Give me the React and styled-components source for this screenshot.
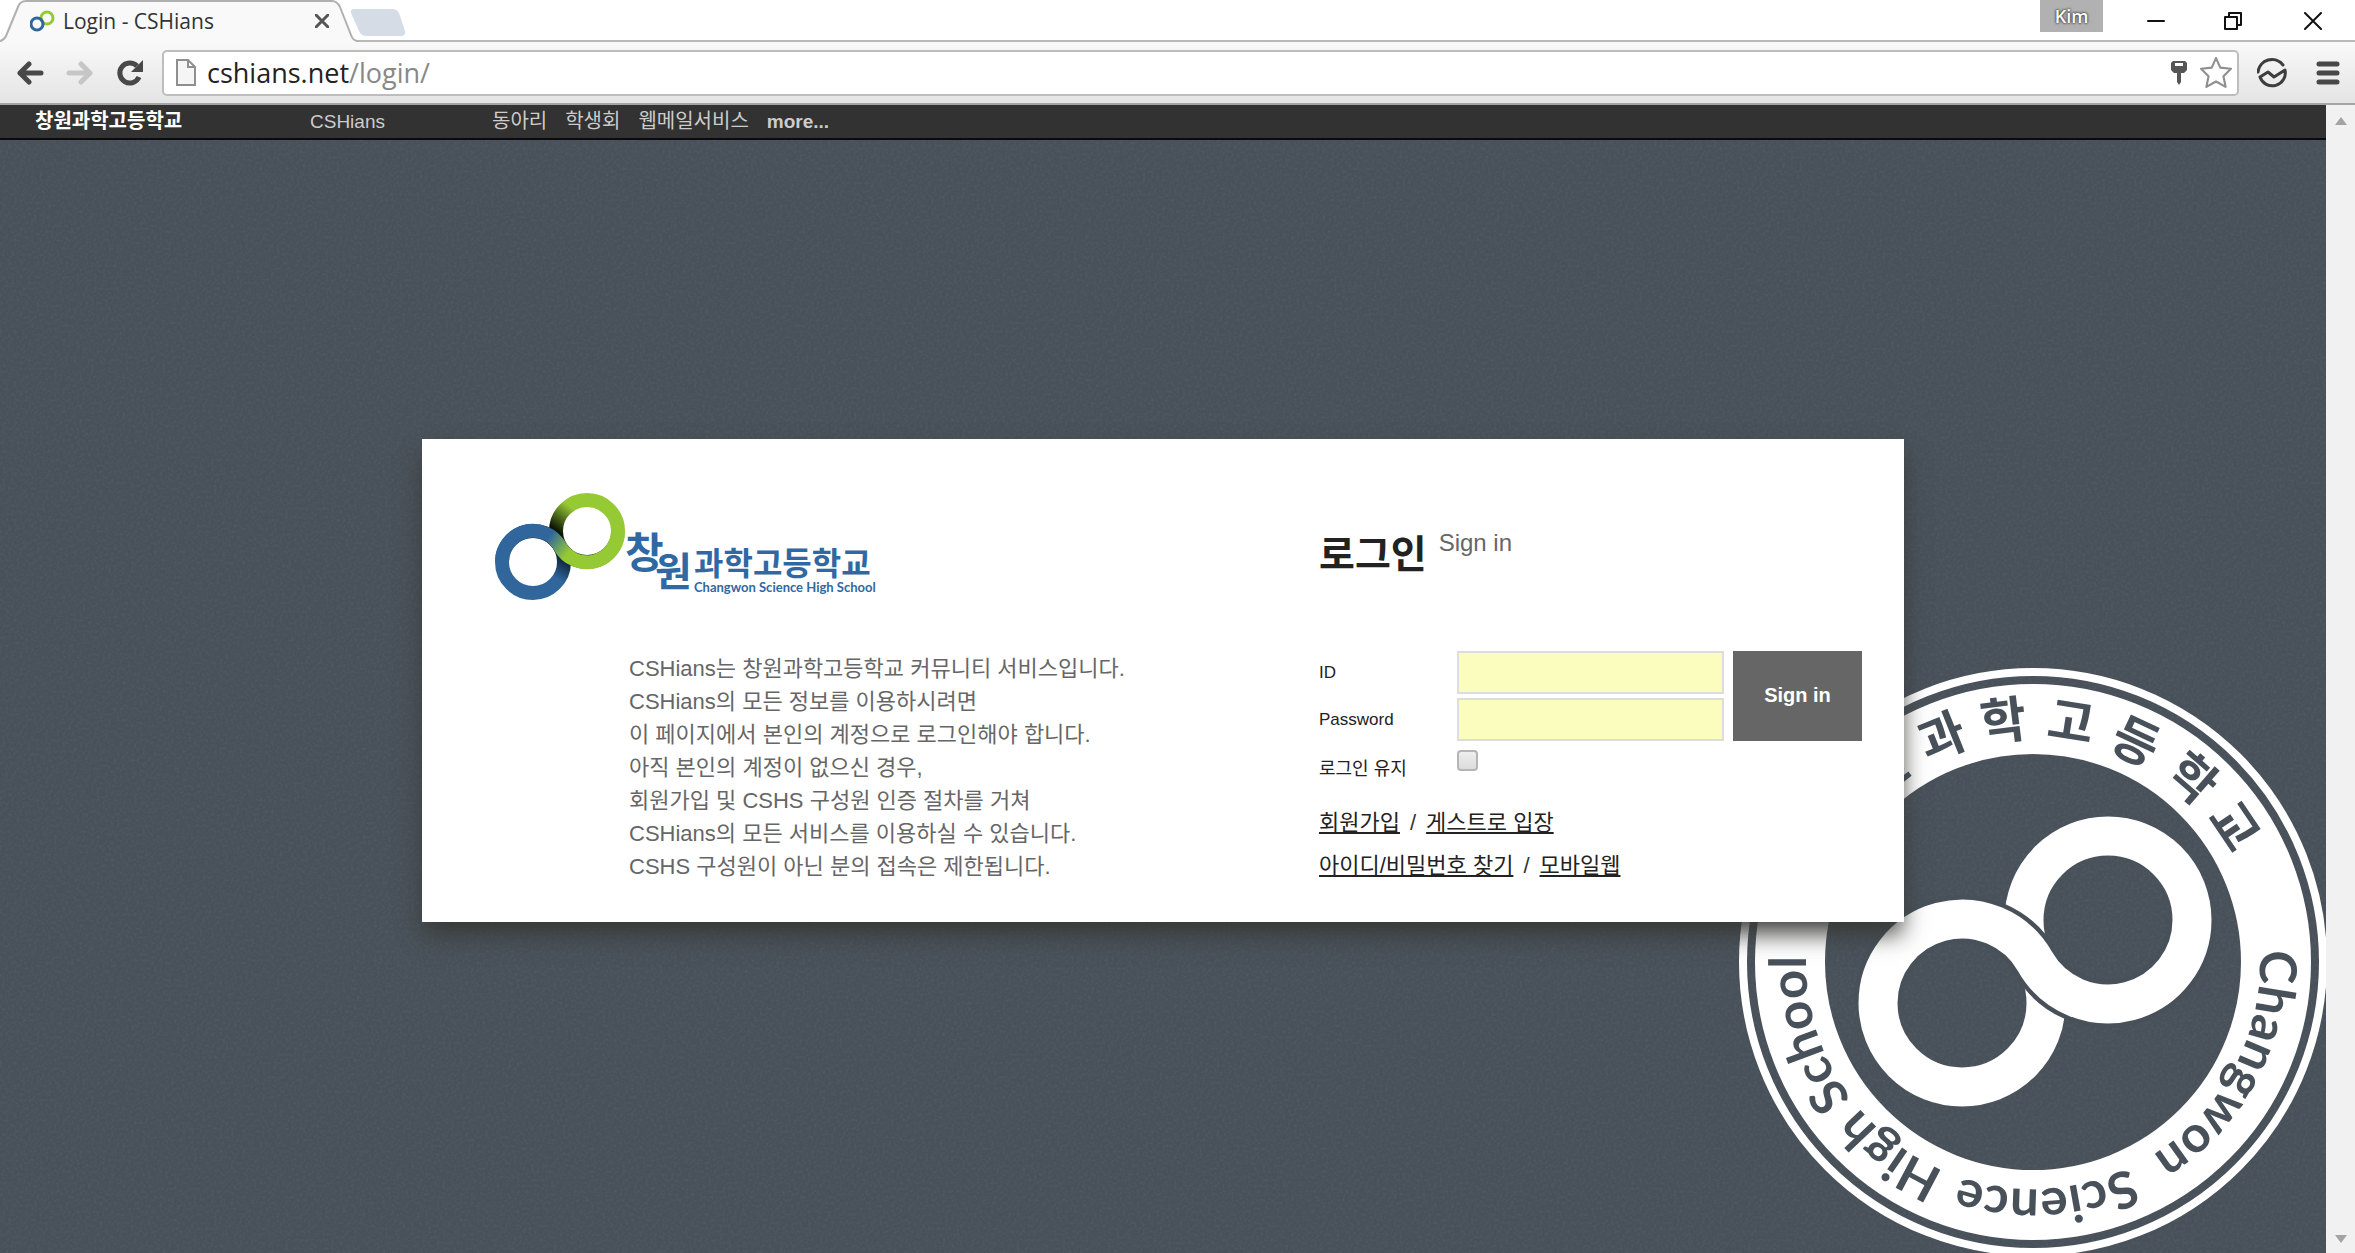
import React from 'react';
import styled, { createGlobalStyle } from 'styled-components';

const latin = '"Liberation Sans", "Noto Sans CJK KR", sans-serif';
const korean = '"Noto Sans CJK KR", sans-serif';
const slate = '#485159';

const Global = createGlobalStyle`
  * { box-sizing: border-box; }
  html, body, #root { height: 100%; margin: 0; }
  body { overflow: hidden; font-family: ${latin}; color: #333; }
`;

const Window = styled.div`
  display: flex;
  flex-direction: column;
  height: 100%;
  background: #fff;
`;

const TabStrip = styled.header`
  display: flex;
  align-items: flex-start;
  height: 42px;
  flex: none;
  background: linear-gradient(#fff 0 40px, #b9b9b9 40px 42px);
`;

const Tab = styled.div`
  position: relative;
  display: flex;
  align-items: center;
  gap: 8px;
  width: 356px;
  height: 42px;
  padding: 0 24px 0 30px;
`;

const TabShape = styled.svg`
  position: absolute;
  inset: 0;
  overflow: visible;
`;

const TabTitle = styled.span`
  position: relative;
  flex: 1;
  font: 21px/42px "Open Sans", sans-serif;
  color: #333;
  white-space: nowrap;
`;

const IconButton = styled.button`
  position: relative;
  display: flex;
  align-items: center;
  justify-content: center;
  width: ${(p) => p.$w || 32}px;
  height: ${(p) => p.$h || 32}px;
  padding: 0;
  border: 0;
  background: none;
`;

const WindowControls = styled.div`
  display: flex;
  margin-left: auto;
`;

const Profile = styled.button`
  width: 63px;
  height: 32px;
  margin-right: 14px;
  padding: 0;
  border: 0;
  background: #b1b1b1;
  color: #fff;
  font: 600 18px/32px "Open Sans", sans-serif;
  text-shadow: 0 0 2px #333, 0 0 3px #333;
`;

const Toolbar = styled.div`
  display: flex;
  align-items: center;
  flex: none;
  height: 63px;
  padding: 0 11px 0 14px;
  background: linear-gradient(#f9f9f9, #e4e4e4);
  border-bottom: 2px solid #a5a5a5;
`;

const NavButtons = styled.div`
  display: flex;
  gap: 18px;
  margin-right: 16px;
`;

const AddressBox = styled.div`
  display: flex;
  align-items: center;
  flex: 1;
  height: 46px;
  padding: 0 0 0 12px;
  margin-right: 17px;
  border: 2px solid #bdbdbd;
  border-radius: 5px;
  background: #fff;
`;

const Address = styled.a`
  flex: 1;
  padding-left: 11px;
  font: 27px/42px "Open Sans", sans-serif;
  color: #888;
  text-decoration: none;
`;

const Host = styled.span`
  color: #222;
`;

const ToolbarEnd = styled.div`
  display: flex;
  gap: 24px;
`;

const Viewport = styled.div`
  display: flex;
  flex: 1;
  min-height: 0;
`;

const Page = styled.div`
  position: relative;
  display: flex;
  flex-direction: column;
  flex: 1;
  overflow: hidden;
  background: ${slate};
`;

const Grain = styled.svg`
  position: absolute;
  inset: 0;
  width: 100%;
  height: 100%;
  pointer-events: none;
`;

const ScrollBar = styled.div`
  display: flex;
  flex-direction: column;
  justify-content: space-between;
  width: 29px;
  background: #f1f1f1;
`;

const SiteNav = styled.nav`
  position: relative;
  display: flex;
  align-items: center;
  flex: none;
  height: 35px;
  padding-left: 35px;
  background: #323232;
  border-bottom: 2px solid #0b0b0b;
`;

const SiteLink = styled.a`
  font: ${(p) => (p.$bold ? 'bold' : 'normal')} ${(p) => p.$size || 19}px/33px ${latin};
  color: ${(p) => p.$color || '#ccc'};
  text-decoration: none;
  white-space: nowrap;
`;

const NavHome = styled.div`
  width: 275px;
`;

const NavBrand = styled.div`
  width: 182px;
`;

const NavMenu = styled.div`
  display: flex;
  gap: 18px;
`;

const Emblem = styled.svg`
  position: absolute;
  right: -3px;
  bottom: -5px;
`;

const Main = styled.main`
  display: flex;
  align-items: center;
  justify-content: center;
  flex: 1;
  padding-bottom: 33px;
`;

const Card = styled.section`
  position: relative;
  display: grid;
  grid-template-columns: 825px 1fr;
  width: 1482px;
  max-width: 100%;
  padding: 44px 42px 35px 72px;
  background: #fff;
  box-shadow: 0 14px 22px -2px rgba(56, 56, 54, 0.95);
`;

const Intro = styled.p`
  margin: 49px 0 0 135px;
  font: 22px/33px ${latin};
  color: #666;
`;

const Logo = styled.svg`
  display: block;
`;

const SignIn = styled.form`
  padding-top: 44px;
`;

const Heading = styled.h1`
  display: flex;
  align-items: flex-start;
  gap: 12px;
  margin: 0 0 76px;
  font: bold 39px/48px ${korean};
  color: #222;
`;

const SubHeading = styled.small`
  font: 24px/32px ${latin};
  color: #666;
`;

const Fields = styled.div`
  display: grid;
  grid-template-columns: 138px 267px 138px;
  grid-template-rows: 43px 43px;
  row-gap: 4px;
`;

const Label = styled.label`
  font: 17px/43px ${latin};
  color: #222;
`;

const TextBox = styled.input`
  width: 267px;
  height: 43px;
  padding: 0 8px;
  border: 2px solid #ddd;
  background: #fbfdbf;
  font: 18px ${latin};
`;

const Submit = styled.button`
  grid-column: 3;
  grid-row: 1 / 3;
  margin-left: 9px;
  height: 90px;
  padding: 0;
  border: 0;
  background: #666;
  color: #fff;
  font: bold 20px ${latin};
`;

const KeepRow = styled.div`
  display: flex;
  align-items: flex-start;
  padding-top: 8px;
`;

const KeepLabel = styled.label`
  width: 138px;
  font: 18px/40px ${latin};
  color: #222;
`;

const Check = styled.input`
  appearance: none;
  width: 21px;
  height: 21px;
  margin: 1px 0 0;
  border: 2px solid #b5b5b5;
  border-radius: 4px;
  background: linear-gradient(#eee, #dcdcdc);
`;

const Links = styled.div`
  margin-top: 12px;
`;

const LinkRow = styled.p`
  display: flex;
  gap: 10px;
  margin: 0;
  font: 22px/43px ${latin};
  color: #333;
`;

const TextLink = styled.a`
  color: #222;
  text-decoration: underline;
`;

const S_BAND = (x1, y1, x2, y2, r) => {
  const mx = (x1 + x2) / 2;
  const my = (y1 + y2) / 2;
  return `M${x1 - r} ${y1} A${r} ${r} 0 0 1 ${mx} ${my} A${r} ${r} 0 0 0 ${x2 + r} ${y2}`;
};

const HANGUL = [
  ['창', -53], ['원', -38], ['과', -22], ['학', -7],
  ['고', 9], ['등', 25], ['학', 41], ['교', 56],
];

const ENGLISH = [
  ['Changwon', 87], ['Science', 155], ['High', 203], ['School', 233],
];

const polar = (deg, r) => {
  const a = (deg * Math.PI) / 180;
  return [296 + r * Math.sin(a), 296 - r * Math.cos(a)];
};

const arc = (start, r) => {
  const [x1, y1] = polar(start, r);
  const [x2, y2] = polar(start + 120, r);
  return `M${x1} ${y1} A${r} ${r} 0 0 1 ${x2} ${y2}`;
};

function SchoolEmblem() {
  const band = S_BAND(225, 337, 371, 254, 84);
  return (
    <Emblem width="592" height="592" viewBox="0 0 592 592" aria-hidden="true">
      <circle cx="296" cy="296" r="290" fill="none" stroke="#fff" strokeWidth="8" />
      <circle cx="296" cy="296" r="243" fill="none" stroke="#fff" strokeWidth="70" />
      <g fill="none" stroke="#fff" strokeWidth="39">
        <circle cx="371" cy="254" r="84" />
        <circle cx="225" cy="337" r="84" />
        <path d={band} stroke={slate} strokeWidth="48" />
        <path d={band} />
      </g>
      <g fill={slate} fontFamily={korean} fontWeight="700" fontSize="50" textAnchor="middle">
        {HANGUL.map(([ch, deg]) => (
          <text key={deg} x="296" y="71" transform={`rotate(${deg} 296 296)`}>{ch}</text>
        ))}
      </g>
      <g fill={slate} fontFamily="Lato, sans-serif" fontWeight="700" fontSize="51">
        {ENGLISH.map(([word, deg]) => (
          <React.Fragment key={word}>
            <path id={`arc-${word}`} d={arc(deg, 227)} fill="none" />
            <text><textPath href={`#arc-${word}`}>{word}</textPath></text>
          </React.Fragment>
        ))}
      </g>
    </Emblem>
  );
}

function SchoolLogo() {
  return (
    <Logo width="390" height="120" viewBox="0 0 390 120" role="img" aria-label="창원과학고등학교 Changwon Science High School">
      <defs>
        <linearGradient id="green" gradientUnits="userSpaceOnUse" x1="58" y1="44" x2="74" y2="22">
          <stop offset="0" stopColor="#0c1505" />
          <stop offset="1" stopColor="#96ca35" />
        </linearGradient>
        <linearGradient id="blue" gradientUnits="userSpaceOnUse" x1="74" y1="72" x2="60" y2="94">
          <stop offset="0" stopColor="#06101c" />
          <stop offset="1" stopColor="#30669c" />
        </linearGradient>
        <linearGradient id="band" gradientUnits="userSpaceOnUse" x1="56" y1="52" x2="76" y2="68">
          <stop offset="0" stopColor="#30669c" />
          <stop offset="1" stopColor="#96ca35" />
        </linearGradient>
      </defs>
      <g fill="none" strokeWidth="14">
        <circle cx="93" cy="48" r="31" stroke="url(#green)" />
        <circle cx="39" cy="79" r="31" stroke="url(#blue)" />
        <path d={S_BAND(39, 79, 93, 48, 31)} stroke="url(#band)" />
      </g>
      <g fill="#2f69a3" fontFamily={korean} fontWeight="700">
        <text x="131" y="85" fontSize="42">창</text>
        <text x="161" y="103" fontSize="40">원</text>
        <text x="200" y="92" fontSize="32">과학고등학교</text>
        <text x="200" y="109" fontFamily="Lato, sans-serif" fontSize="13">Changwon Science High School</text>
      </g>
    </Logo>
  );
}

const stroke = (color, width) => ({ fill: 'none', stroke: color, strokeWidth: width, strokeLinecap: 'round', strokeLinejoin: 'round' });

export default function App() {
  return (
    <>
      <Global />
      <Window>
        <TabStrip>
          <Tab>
            <TabShape width="430" height="42" viewBox="0 0 430 42">
              <path d="M0 42 Q4 41 6 36 L18 7 Q20 1 26 1 H332 Q337 1 340 7 L351 35 Q353 41 358 42 Z" fill="#f9f9f9" />
              <path d="M0 41 Q4 40 6 36 L18 7 Q20 1 26 1 H332 Q337 1 340 7 L351 35 Q353 41 358 41" {...stroke('#b0b0b0', 2)} />
              <path d="M354 9 H392 Q397 9 399 13 L405 31 Q406 36 401 36 H367 Q361 36 359 31 L351 13 Q350 9 354 9Z" fill="#d6dce5" />
            </TabShape>
            <IconButton as="span" $w={25} $h={42}>
              <svg width="25" height="22" viewBox="0 0 25 22" fill="none" strokeWidth="3">
                <circle cx="17" cy="8" r="6" stroke="#96ca35" />
                <circle cx="7" cy="14" r="6" stroke="#30669c" />
              </svg>
            </IconButton>
            <TabTitle>Login - CSHians</TabTitle>
            <IconButton $w={20} $h={42} aria-label="Close tab">
              <svg width="14" height="14" viewBox="0 0 14 14"><path d="M1 1L13 13M13 1L1 13" {...stroke('#555', 3)} /></svg>
            </IconButton>
          </Tab>
          <WindowControls>
            <Profile>Kim</Profile>
            <IconButton $w={78} $h={42} aria-label="Minimize"><svg width="18" height="18"><path d="M1 9H17" {...stroke('#111', 2)} /></svg></IconButton>
            <IconButton $w={75} $h={42} aria-label="Restore">
              <svg width="18" height="18"><path d="M1 5H13V17H1ZM5 5V1H17V13H13" {...stroke('#111', 2)} /></svg>
            </IconButton>
            <IconButton $w={85} $h={42} aria-label="Close"><svg width="18" height="18"><path d="M1 1L17 17M17 1L1 17" {...stroke('#111', 2)} /></svg></IconButton>
          </WindowControls>
        </TabStrip>

        <Toolbar>
          <NavButtons>
            <IconButton aria-label="Back"><svg width="28" height="24" viewBox="0 0 28 24"><path d="M25 12H4M13 3L4 12L13 21" {...stroke('#484848', 5)} /></svg></IconButton>
            <IconButton aria-label="Forward"><svg width="28" height="24" viewBox="0 0 28 24"><path d="M3 12H24M15 3L24 12L15 21" {...stroke('#c6c6c6', 5)} /></svg></IconButton>
            <IconButton aria-label="Reload">
              <svg width="28" height="28" viewBox="0 0 28 28">
                <path d="M23 18A10 10 0 1 1 21 7" fill="none" stroke="#484848" strokeWidth="5" />
                <path d="M27 1V13H15Z" fill="#484848" />
              </svg>
            </IconButton>
          </NavButtons>
          <AddressBox>
            <svg width="20" height="27" viewBox="0 0 20 27"><path d="M1 1H12L19 8V26H1ZM12 1V8H19" fill="#f5f5f5" stroke="#8f8f8f" strokeWidth="2" /></svg>
            <Address href="#login"><Host>cshians.net</Host>/login/</Address>
            <IconButton aria-label="Saved password">
              <svg width="16" height="24" viewBox="0 0 16 24"><path fillRule="evenodd" d="M2 0H14L16 2V9L13 12H10V21L8 24L6 21V12H3L0 9V2ZM4 2V5H12V2Z" fill="#555" /></svg>
            </IconButton>
            <IconButton $w={42} aria-label="Bookmark">
              <svg width="32" height="32" viewBox="0 0 30 30"><path d="M15 1L19 10L29 11L22 18L24 28L15 23L6 28L8 18L1 11L11 10Z" {...stroke('#8f8f8f', 2)} /></svg>
            </IconButton>
          </AddressBox>
          <ToolbarEnd>
            <IconButton aria-label="Extension">
              <svg width="30" height="30" viewBox="0 0 30 30">
                <path d="M1 14A14 14 0 0 1 26 7M3 19L11 14L17 19L28 12A13 13 0 0 1 3 19" {...stroke('#3d3d3d', 3)} />
              </svg>
            </IconButton>
            <IconButton aria-label="Menu"><svg width="24" height="24"><path d="M3 3H21M3 12H21M3 21H21" {...stroke('#484848', 5)} /></svg></IconButton>
          </ToolbarEnd>
        </Toolbar>

        <Viewport>
          <Page>
            <Grain aria-hidden="true">
              <filter id="grain">
                <feTurbulence type="fractalNoise" baseFrequency="0.35" numOctaves="2" />
                <feColorMatrix values="0 0 0 0 1  0 0 0 0 1  0 0 0 0 1  0.5 0 0 0 -0.2" />
              </filter>
              <rect width="100%" height="100%" filter="url(#grain)" opacity="0.18" />
            </Grain>
            <SchoolEmblem />
            <SiteNav>
              <NavHome><SiteLink href="#home" $bold $size={20} $color="#fff">창원과학고등학교</SiteLink></NavHome>
              <NavBrand><SiteLink href="#cshians">CSHians</SiteLink></NavBrand>
              <NavMenu>
                <SiteLink href="#clubs" $size={20}>동아리</SiteLink>
                <SiteLink href="#council" $size={20}>학생회</SiteLink>
                <SiteLink href="#mail" $size={20}>웹메일서비스</SiteLink>
                <SiteLink href="#more" $bold>more...</SiteLink>
              </NavMenu>
            </SiteNav>
            <Main>
              <Card>
                <div>
                  <SchoolLogo />
                  <Intro>
                    CSHians는 창원과학고등학교 커뮤니티 서비스입니다.<br />
                    CSHians의 모든 정보를 이용하시려면<br />
                    이 페이지에서 본인의 계정으로 로그인해야 합니다.<br />
                    아직 본인의 계정이 없으신 경우,<br />
                    회원가입 및 CSHS 구성원 인증 절차를 거쳐<br />
                    CSHians의 모든 서비스를 이용하실 수 있습니다.<br />
                    CSHS 구성원이 아닌 분의 접속은 제한됩니다.
                  </Intro>
                </div>
                <SignIn onSubmit={(e) => e.preventDefault()}>
                  <Heading>로그인 <SubHeading>Sign in</SubHeading></Heading>
                  <Fields>
                    <Label htmlFor="uid">ID</Label>
                    <TextBox id="uid" type="text" />
                    <Submit type="submit">Sign in</Submit>
                    <Label htmlFor="upw">Password</Label>
                    <TextBox id="upw" type="password" />
                  </Fields>
                  <KeepRow>
                    <KeepLabel htmlFor="keep">로그인 유지</KeepLabel>
                    <Check id="keep" type="checkbox" />
                  </KeepRow>
                  <Links>
                    <LinkRow>
                      <TextLink href="#join">회원가입</TextLink>
                      <span>/</span>
                      <TextLink href="#guest">게스트로 입장</TextLink>
                    </LinkRow>
                    <LinkRow>
                      <TextLink href="#find">아이디/비밀번호 찾기</TextLink>
                      <span>/</span>
                      <TextLink href="#mobile">모바일웹</TextLink>
                    </LinkRow>
                  </Links>
                </SignIn>
              </Card>
            </Main>
          </Page>
          <ScrollBar>
            <IconButton $w={29} aria-label="Scroll up"><svg width="12" height="8"><path d="M0 8L6 0L12 8Z" fill="#a3a3a3" /></svg></IconButton>
            <IconButton $w={29} $h={28} aria-label="Scroll down"><svg width="12" height="8"><path d="M0 0L6 8L12 0Z" fill="#a3a3a3" /></svg></IconButton>
          </ScrollBar>
        </Viewport>
      </Window>
    </>
  );
}
